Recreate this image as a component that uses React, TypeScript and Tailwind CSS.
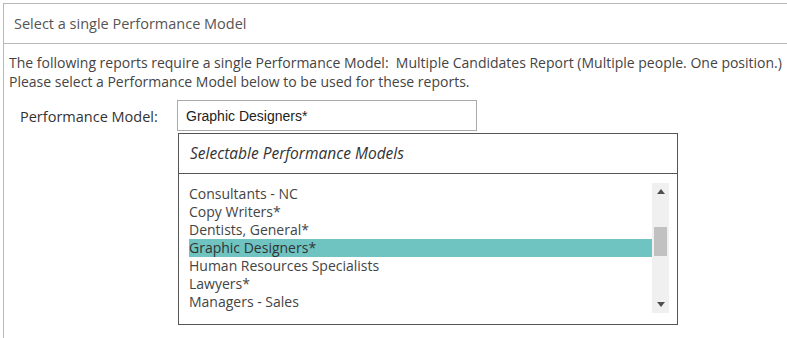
import React from 'react';

const models = [
  'Consultants - NC',
  'Copy Writers*',
  'Dentists, General*',
  'Graphic Designers*',
  'Human Resources Specialists',
  'Lawyers*',
  'Managers - Sales',
];

const selected = 'Graphic Designers*';

const App: React.FC = () => {
  return (
    <div className="w-[787px] h-[338px] overflow-hidden bg-white pt-[3px] pl-[3px] font-['Open_Sans',sans-serif] text-[14px] text-[#444]">
      <div className="h-full border-l border-t border-[#b8b8b8]">
        {/* panel header */}
        <div className="h-[40px] border-b border-[#b8b8b8] pl-[10px] flex items-center text-[14.5px] text-[#555]">
          Select a single Performance Model
        </div>

        <div className="pt-[9px] pl-[5px] leading-[19px] whitespace-nowrap">
          <p>The following reports require a single Performance Model:&nbsp; Multiple Candidates Report (Multiple people. One position.)</p>
          <p>Please select a Performance Model below to be used for these reports.</p>
        </div>

        <div className="flex mt-[9px]">
          <div className="w-[173px] pl-[16px] pt-[6px] font-medium text-[14.5px] text-[#333]">Performance Model:</div>
          <div>
            <div className="w-[300px] h-[31px] border border-[#aaa] pl-[8px] pt-[2px] flex items-center font-['Liberation_Sans',Arial,sans-serif] text-[14px] text-[#222]">
              Graphic Designers*
            </div>

            {/* dropdown */}
            <div className="ml-[1px] mt-[2px] w-[500px] h-[192px] border border-[#555] flex flex-col">
              <div className="h-[40px] border-b border-[#555] pl-[11px] flex items-center italic text-[15.5px] text-[#333]">
                Selectable Performance Models
              </div>
              <div className="flex mt-[9px] ml-[10px] mr-[8px] h-[130px]">
                <ul className="flex-1 pt-[2px] overflow-hidden">
                  {models.map((m) => (
                    <li
                      key={m}
                      className={`h-[18px] leading-[18px] whitespace-nowrap ${
                        m === selected ? 'bg-[#6fc4c2] text-[#333]' : ''
                      }`}
                    >
                      {m}
                    </li>
                  ))}
                </ul>
                <div className="w-[17px] h-full bg-[#f0f0f0] flex flex-col items-center justify-between">
                  <div className="h-[17px] flex items-center justify-center">
                    <svg width="8" height="5" viewBox="0 0 8 5">
                      <path d="M4 0 L8 5 L0 5 Z" fill="#505050" />
                    </svg>
                  </div>
                  <div className="flex-1 w-full relative">
                    <div className="absolute left-[2px] right-[2px] top-[27px] h-[29px] bg-[#c1c1c1]" />
                  </div>
                  <div className="h-[17px] flex items-center justify-center">
                    <svg width="8" height="5" viewBox="0 0 8 5">
                      <path d="M0 0 L8 0 L4 5 Z" fill="#505050" />
                    </svg>
                  </div>
                </div>
              </div>
            </div>
          </div>
        </div>
      </div>
    </div>
  );
};

export default App;
